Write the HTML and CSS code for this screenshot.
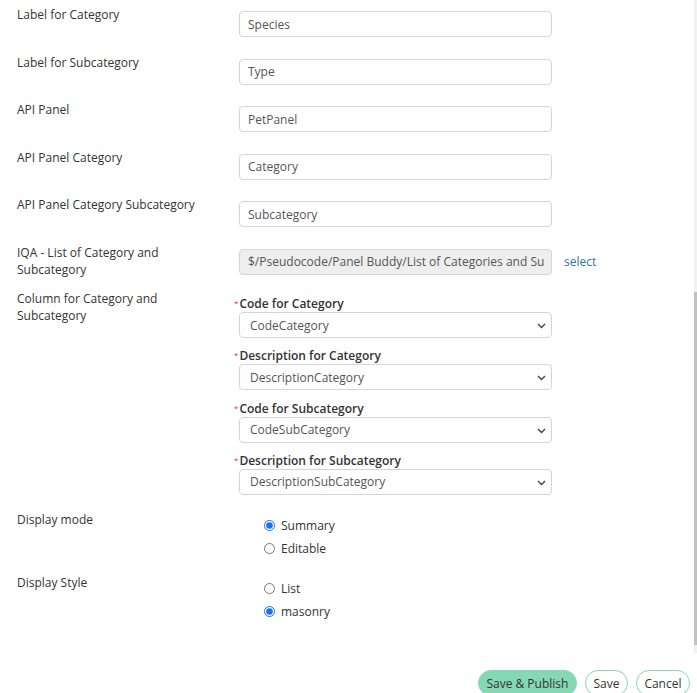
FILE: index.html
```html
<!DOCTYPE html>
<html lang="en">
<head>
    <meta charset="UTF-8">
    <meta name="viewport" content="width=device-width, initial-scale=1.0">
    <title>Panel settings</title>
    <link rel="stylesheet" href="styles.css">
</head>
<body>

    <div class="panel">
        <!-- scrolling settings area -->
        <div class="scroll-area">
            <form class="form">
                <div class="row">
                    <div class="label">Label for Category</div>
                    <div class="control"><input type="text" value="Species"></div>
                </div>
                <div class="row">
                    <div class="label">Label for Subcategory</div>
                    <div class="control"><input type="text" value="Type"></div>
                </div>
                <div class="row">
                    <div class="label">API Panel</div>
                    <div class="control"><input type="text" value="PetPanel"></div>
                </div>
                <div class="row">
                    <div class="label">API Panel Category</div>
                    <div class="control"><input type="text" value="Category"></div>
                </div>
                <div class="row">
                    <div class="label">API Panel Category Subcategory</div>
                    <div class="control"><input type="text" value="Subcategory"></div>
                </div>
                <div class="row row-wrap">
                    <div class="label">IQA - List of Category and Subcategory</div>
                    <div class="control"><input type="text" class="readonly" value="$/Pseudocode/Panel Buddy/List of Categories and Subcategories" readonly></div>
                    <a class="select-link" href="#">select</a>
                </div>
                <div class="row">
                    <div class="label">Column for Category and Subcategory</div>
                    <div class="control">
                        <div class="field">
                            <div class="sublabel"><span class="req">*</span>Code for Category</div>
                            <div class="select-wrap">
                                <select><option>CodeCategory</option></select>
                                <svg class="chevron" width="9" height="6" viewBox="0 0 9 6"><path d="M1 1l3.5 3.5L8 1" fill="none" stroke="#444" stroke-width="1.4"/></svg>
                            </div>
                        </div>
                        <div class="field">
                            <div class="sublabel"><span class="req">*</span>Description for Category</div>
                            <div class="select-wrap">
                                <select><option>DescriptionCategory</option></select>
                                <svg class="chevron" width="9" height="6" viewBox="0 0 9 6"><path d="M1 1l3.5 3.5L8 1" fill="none" stroke="#444" stroke-width="1.4"/></svg>
                            </div>
                        </div>
                        <div class="field">
                            <div class="sublabel"><span class="req">*</span>Code for Subcategory</div>
                            <div class="select-wrap">
                                <select><option>CodeSubCategory</option></select>
                                <svg class="chevron" width="9" height="6" viewBox="0 0 9 6"><path d="M1 1l3.5 3.5L8 1" fill="none" stroke="#444" stroke-width="1.4"/></svg>
                            </div>
                        </div>
                        <div class="field">
                            <div class="sublabel"><span class="req">*</span>Description for Subcategory</div>
                            <div class="select-wrap">
                                <select><option>DescriptionSubCategory</option></select>
                                <svg class="chevron" width="9" height="6" viewBox="0 0 9 6"><path d="M1 1l3.5 3.5L8 1" fill="none" stroke="#444" stroke-width="1.4"/></svg>
                            </div>
                        </div>
                    </div>
                </div>
                <div class="row row-radio">
                    <div class="label">Display mode</div>
                    <div class="radio-group">
                        <label><input type="radio" name="mode" checked>Summary</label>
                        <label><input type="radio" name="mode">Editable</label>
                    </div>
                </div>
                <div class="row row-radio">
                    <div class="label">Display Style</div>
                    <div class="radio-group">
                        <label><input type="radio" name="style">List</label>
                        <label><input type="radio" name="style" checked>masonry</label>
                    </div>
                </div>
            </form>
            <div class="scrollbar"><div class="thumb"></div></div>
        </div>

        <!-- 按钮区 -->
        <div class="footer">
            <button class="btn btn-primary">Save &amp; Publish</button>
            <button class="btn">Save</button>
            <button class="btn">Cancel</button>
        </div>
    </div>

</body>
</html>
```

FILE: styles.css
```css
body, html {
    margin: 0;
    padding: 0;
    background-color: #fff;
    font-family: "Open Sans", "Liberation Sans", sans-serif;
    font-size: 12px;
    color: #333;
    overflow: hidden;
}

.scroll-area {
    display: flex;
    height: 653px;
}

.form {
    flex: 1;
    padding: 6px 0 0 17px;
}

/* 每一行：左边标签，右边输入 */
.row {
    display: grid;
    grid-template-columns: 222px 313px auto;
    align-items: start;
    margin-bottom: 16.5px;
}

.row-wrap {
    margin-bottom: 12.5px;
}

.row-radio {
    margin-bottom: 13.5px;
}

.label {
    line-height: 17px;
    padding-right: 30px;
    color: #333;
}

.control {
    padding-top: 5px;
}

input[type="text"], select {
    display: block;
    width: 313px;
    height: 26px;
    box-sizing: border-box;
    border: 1px solid #d5d5d5;
    border-radius: 4px;
    padding: 0 7px 0 8px;
    font-family: inherit;
    font-size: 12px;
    color: #555;
    background-color: #fff;
    outline: none;
}

input.readonly {
    background-color: #eee;
}

select {
    appearance: none;
    -webkit-appearance: none;
    padding-left: 10px;
}

.select-wrap {
    position: relative;
}

.chevron {
    position: absolute;
    right: 6px;
    top: 11px;
    pointer-events: none;
}

.select-link {
    margin: 5px 0 0 12px;
    line-height: 26px;
    color: #2b7a9b;
    text-decoration: none;
}

.field {
    margin-bottom: 9.3px;
}

.field:last-child {
    margin-bottom: 0;
}

.sublabel {
    height: 17px;
    line-height: 17px;
    font-weight: 600;
    color: #333;
    margin-left: -5px;
}

.req {
    position: relative;
    top: -2px;
    color: #e0322f;
    font-size: 8px;
    font-weight: 400;
    margin-right: 1px;
}

/* 单选按钮 */
.radio-group {
    display: flex;
    flex-direction: column;
    padding: 3px 0 0 25px;
}

.radio-group label {
    display: flex;
    align-items: center;
    line-height: 23px;
    color: #333;
}

.radio-group input[type="radio"] {
    width: 11px;
    height: 11px;
    margin: 0 6px 0 0;
    accent-color: #1a73e8;
}

/* 假的滚动条 */
.scrollbar {
    width: 3px;
    background-color: #f1f1f1;
}

.thumb {
    margin-top: 292px;
    height: 353px;
    background-color: #c1c1c1;
}

.footer {
    display: flex;
    justify-content: flex-end;
    gap: 8px;
    padding: 17px 7px 0 0;
}

.btn {
    height: 26px;
    padding: 0 7.5px;
    border: 1.5px solid #84d8b3;
    border-radius: 13px;
    background-color: #fff;
    font-family: inherit;
    font-size: 12px;
    color: #333;
    cursor: pointer;
}

.btn-primary {
    background-color: #84d8b3;
}
```
